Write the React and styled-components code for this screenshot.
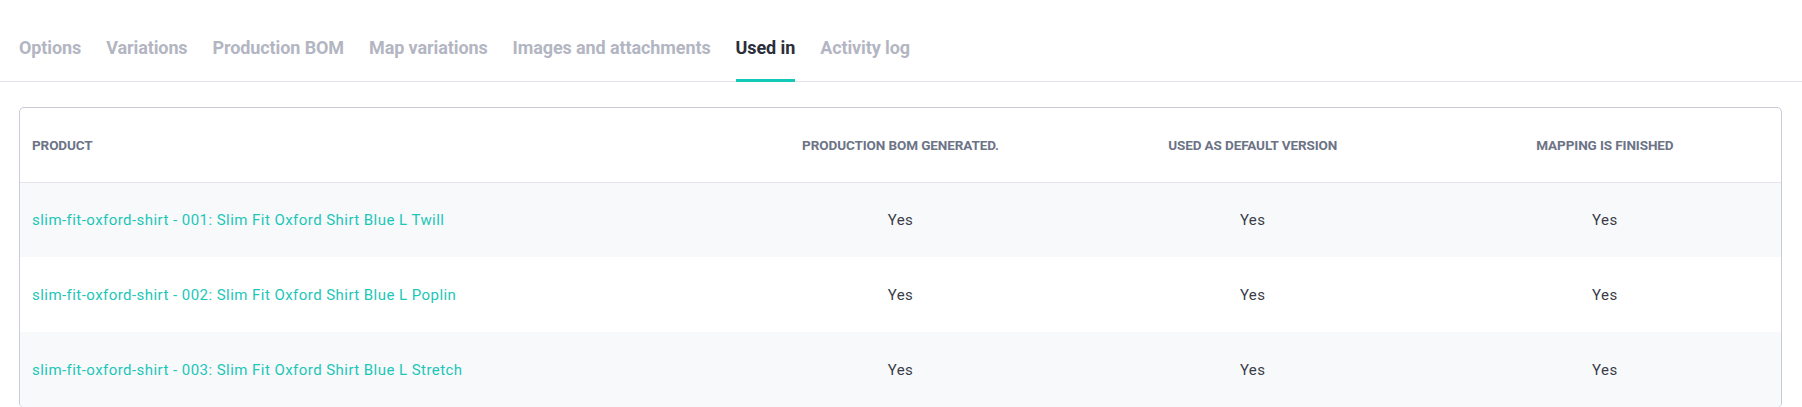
import React from "react";
import styled, { createGlobalStyle } from "styled-components";

const GlobalStyle = createGlobalStyle`
  html, body {
    margin: 0;
    padding: 0;
    background: #ffffff;
    font-family: Roboto, "Liberation Sans", Arial, sans-serif;
  }
  * { box-sizing: border-box; }
`;

const Page = styled.div`
  width: 100%;
  background: #ffffff;
`;

const TabBar = styled.nav`
  display: flex;
  gap: 25px;
  padding-left: 19px;
  height: 82px;
  border-bottom: 1px solid #e2e3e9;
`;

const Tab = styled.a`
  display: flex;
  align-items: center;
  height: 82px;
  padding-top: 15px;
  margin-bottom: -1px;
  border-bottom: 3px solid ${(p) => (p.$active ? "#14c8b8" : "transparent")};
  font-size: 18px;
  font-weight: 700;
  letter-spacing: -0.1px;
  color: ${(p) => (p.$active ? "#2b2e39" : "#b3b6c2")};
  cursor: pointer;
  white-space: nowrap;
`;

const Content = styled.section`
  padding: 25px 20px 0 19px;
`;

const Card = styled.div`
  border: 1px solid #c9cbd9;
  border-radius: 5px;
  overflow: hidden;
`;

const Table = styled.table`
  width: 100%;
  border-collapse: collapse;
  table-layout: fixed;
`;

const HeadCell = styled.th`
  width: ${(p) => p.$width};
  height: 74px;
  padding: 0 12px;
  text-align: ${(p) => (p.$align === "left" ? "left" : "center")};
  font-size: 13.5px;
  font-weight: 700;
  letter-spacing: -0.1px;
  text-transform: uppercase;
  color: #6c7386;
  border-bottom: 1px solid #e4e5ea;
`;

const Row = styled.tr`
  background: ${(p) => (p.$striped ? "#f8f9fb" : "#ffffff")};
  & + & td {
    border-top: 1px solid #e4e5ea;
  }
`;

const Cell = styled.td`
  height: 75px;
  padding: 0 12px;
  text-align: ${(p) => (p.$align === "left" ? "left" : "center")};
  font-size: 15px;
  letter-spacing: 0.45px;
  color: #3a3d48;
`;

const ProductLink = styled.a`
  color: #1cc6b8;
  text-decoration: none;
  cursor: pointer;
`;

const tabs = [
  "Options",
  "Variations",
  "Production BOM",
  "Map variations",
  "Images and attachments",
  "Used in",
  "Activity log",
];

const columns = [
  { label: "Product", width: "40%", align: "left" },
  { label: "Production BOM generated.", width: "20%" },
  { label: "Used as default version", width: "20%" },
  { label: "Mapping is finished", width: "20%" },
];

const products = [
  { code: "001", name: "Slim Fit Oxford Shirt Blue L Twill" },
  { code: "002", name: "Slim Fit Oxford Shirt Blue L Poplin" },
  { code: "003", name: "Slim Fit Oxford Shirt Blue L Stretch" },
];

export default function App() {
  return (
    <Page>
      <GlobalStyle />
      <TabBar>
        {tabs.map((t) => (
          <Tab key={t} $active={t === "Used in"}>
            {t}
          </Tab>
        ))}
      </TabBar>
      <Content>
        <Card>
          <Table>
            <thead>
              <tr>
                {columns.map((c) => (
                  <HeadCell key={c.label} $width={c.width} $align={c.align}>
                    {c.label}
                  </HeadCell>
                ))}
              </tr>
            </thead>
            <tbody>
              {products.map((p, i) => (
                <Row key={p.code} $striped={i % 2 === 0}>
                  <Cell $align="left">
                    <ProductLink>
                      slim-fit-oxford-shirt - {p.code}: {p.name}
                    </ProductLink>
                  </Cell>
                  <Cell>Yes</Cell>
                  <Cell>Yes</Cell>
                  <Cell>Yes</Cell>
                </Row>
              ))}
            </tbody>
          </Table>
        </Card>
      </Content>
    </Page>
  );
}
